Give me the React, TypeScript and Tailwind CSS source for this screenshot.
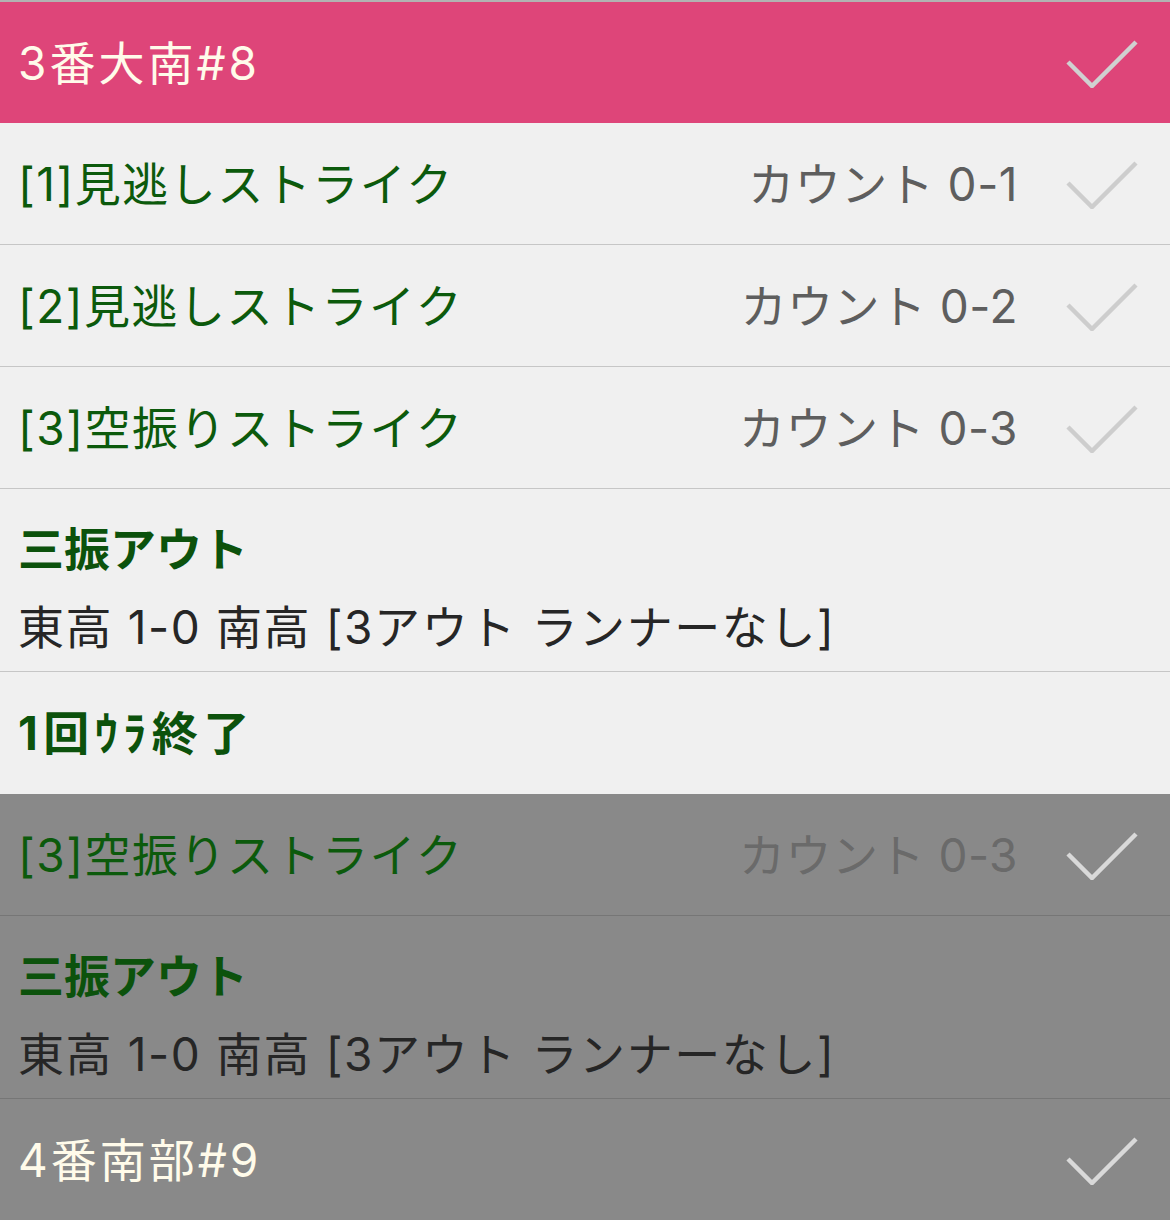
import React from 'react'

const FONT = { fontFamily: 'Inter, "Noto Sans CJK JP", "Noto Sans", sans-serif' }

function Check({ color }: { color: string }) {
  return (
    <svg width="72" height="50" viewBox="0 0 72 50" className="shrink-0">
      <path d="M2 24 L26 48 L70 4" fill="none" stroke={color} strokeWidth="4.5" />
    </svg>
  )
}

type Pitch = { label: string; count: string }

function PitchRow({ p, dark }: { p: Pitch; dark?: boolean }) {
  return (
    <div
      className={`flex items-center h-[122px] pl-[18px] pr-[32px] border-b ${
        dark ? 'bg-[#898989] border-[#767676]' : 'bg-[#f0f0f0] border-[#c6c6c6]'
      }`}
    >
      <div className="flex-1 text-[46px] text-[#0c5a0c] leading-none tracking-[1.5px]">{p.label}</div>
      <div
        className={`text-[46px] leading-none mr-[48px] tracking-[0.5px] ${
          dark ? 'text-[#6a6a6a]' : 'text-[#5e5e5e]'
        }`}
      >
        {p.count}
      </div>
      <Check color={dark ? '#d9d9d9' : '#cdcdcd'} />
    </div>
  )
}

function OutRow({ dark }: { dark?: boolean }) {
  return (
    <div
      className={`h-[183px] pl-[18px] pt-[37px] border-b ${
        dark ? 'bg-[#898989] border-[#767676]' : 'bg-[#f0f0f0] border-[#c6c6c6]'
      }`}
    >
      <div className="text-[46px] font-bold text-[#0c520c] leading-none">三振アウト</div>
      <div className="text-[46px] text-[#262626] leading-none mt-[32px] tracking-[1.6px]">
        東高 1-0 南高 [3アウト ランナーなし]
      </div>
    </div>
  )
}

function BatterHeader({ label, bg }: { label: string; bg: string }) {
  return (
    <div className={`flex items-center h-[121px] pl-[18px] pr-[32px] ${bg}`}>
      <div className="flex-1 text-[46px] text-[#fffbea] leading-none tracking-[3px]">{label}</div>
      <Check color={bg === 'bg-[#de4579]' ? '#d0d0d0' : '#d9d9d9'} />
    </div>
  )
}

export default function App() {
  const pitches: Pitch[] = [
    { label: '[1]見逃しストライク', count: 'カウント 0-1' },
    { label: '[2]見逃しストライク', count: 'カウント 0-2' },
    { label: '[3]空振りストライク', count: 'カウント 0-3' },
  ]

  return (
    <div className="w-[1170px] h-[1220px] overflow-hidden bg-[#f0f0f0]" style={FONT}>
      <div className="h-[2px] bg-[#b2b2b2]" />
      <BatterHeader label="3番大南#8" bg="bg-[#de4579]" />
      {pitches.map((p) => (
        <PitchRow key={p.label + p.count} p={p} />
      ))}
      <OutRow />
      <div className="h-[122px] flex items-center pl-[18px] bg-[#f0f0f0]">
        <div className="text-[46px] font-bold text-[#0c520c] leading-none tracking-[5.5px]">1回ｳﾗ終了</div>
      </div>

      {/* previous at-bat, dimmed */}
      <PitchRow p={pitches[2]} dark />
      <OutRow dark />
      <BatterHeader label="4番南部#9" bg="bg-[#898989]" />
    </div>
  )
}
